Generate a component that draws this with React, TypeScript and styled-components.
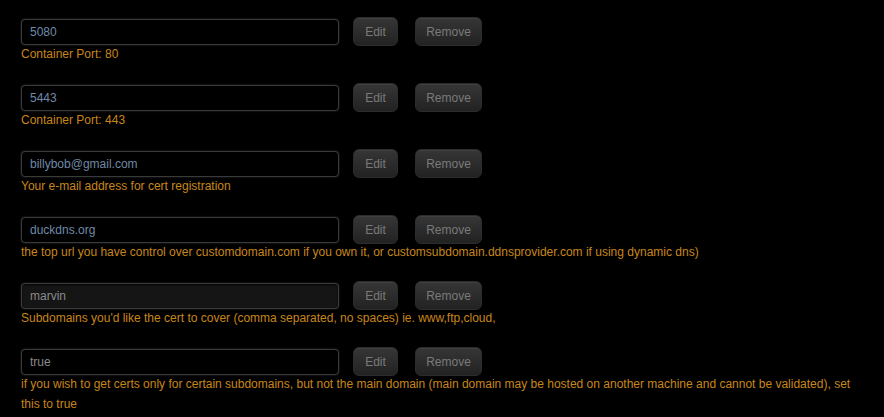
import React from "react";
import styled, { createGlobalStyle } from "styled-components";

const Global = createGlobalStyle`
  html, body { margin: 0; padding: 0; background: #000; }
  body { font-family: "Liberation Sans", Arial, sans-serif; font-size: 12px; }
`;

const Page = styled.div`
  padding: 17px 21px 0 21px;
  width: 842px;
`;

const Field = styled.div`
  margin-bottom: 19px;
`;

const Row = styled.div`
  display: flex;
  align-items: center;
  height: 29px;
`;

const Input = styled.input<{ $tone: string; $filled?: boolean }>`
  box-sizing: border-box;
  width: 318px;
  height: 26px;
  padding: 0 8px;
  margin: 0;
  border: 1px solid #3a3a3a;
  border-radius: 4px;
  background: ${(p) => (p.$filled ? "#151515" : "#000")};
  color: ${(p) => p.$tone};
  font-family: "Liberation Sans", Arial, sans-serif;
  font-size: 12px;
  box-shadow: 0 0 2px rgba(110, 110, 110, 0.45), inset 0 1px 2px rgba(0, 0, 0, 0.8);
  outline: none;
`;

const Button = styled.button<{ $w: number; $gap: number }>`
  box-sizing: border-box;
  width: ${(p) => p.$w}px;
  height: 29px;
  margin: 0 0 0 ${(p) => p.$gap}px;
  padding: 0;
  border: 1px solid #2c2c2c;
  border-radius: 6px;
  background: linear-gradient(#363636, #222);
  color: #7a7a7a;
  font-family: "Liberation Sans", Arial, sans-serif;
  font-size: 12px;
  box-shadow: inset 0 1px 0 rgba(255, 255, 255, 0.05);
  cursor: pointer;
`;

const Label = styled.div`
  margin-top: -2px;
  line-height: 20px;
  color: #c8861a;
  font-size: 12px;
`;

const fields = [
  { value: "5080", tone: "#6f8aaa", label: "Container Port: 80" },
  { value: "5443", tone: "#6f8aaa", label: "Container Port: 443" },
  { value: "billybob@gmail.com", tone: "#7088a4", label: "Your e-mail address for cert registration" },
  {
    value: "duckdns.org",
    tone: "#6f8aaa",
    label:
      "the top url you have control over customdomain.com if you own it, or customsubdomain.ddnsprovider.com if using dynamic dns)",
  },
  {
    value: "marvin",
    tone: "#8a8a8a",
    filled: true,
    label: "Subdomains you'd like the cert to cover (comma separated, no spaces) ie. www,ftp,cloud,",
  },
  {
    value: "true",
    tone: "#8a8a8a",
    label:
      "if you wish to get certs only for certain subdomains, but not the main domain (main domain may be hosted on another machine and cannot be validated), set this to true",
  },
];

export default function App() {
  return (
    <>
      <Global />
      <Page>
        {fields.map((f) => (
          <Field key={f.value}>
            <Row>
              <Input $tone={f.tone} $filled={f.filled} defaultValue={f.value} />
              <Button $w={45} $gap={14}>Edit</Button>
              <Button $w={67} $gap={17}>Remove</Button>
            </Row>
            <Label>{f.label}</Label>
          </Field>
        ))}
      </Page>
    </>
  );
}
